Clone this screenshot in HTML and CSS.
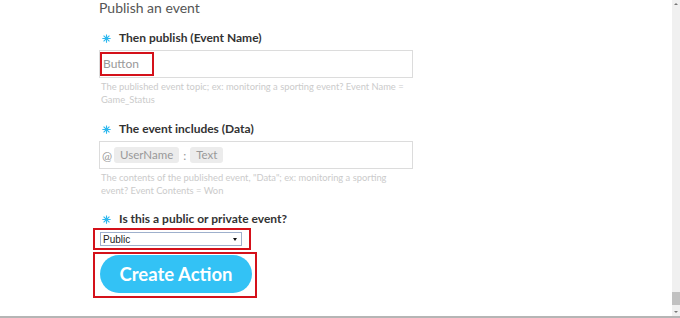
FILE: index.html
```html
<!DOCTYPE html>
<html>
<head>
<meta charset="utf-8">
<link rel="stylesheet" href="styles.css">
</head>
<body>
<div class="page">
  <main class="main">
    <div class="form">
      <h2 class="title">Publish an event</h2>

      <div class="label l1"><svg class="ast" viewBox="0 0 12 12"><path d="M6 0.5V11.5M0.5 6H11.5M2.1 2.1L9.9 9.9M9.9 2.1L2.1 9.9"/></svg>Then publish (Event Name)</div>
      <div class="input"><span class="mark-text">Button</span></div>
      <div class="help">The published event topic; ex: monitoring a sporting event? Event Name =<br>Game_Status</div>

      <div class="label l2"><svg class="ast" viewBox="0 0 12 12"><path d="M6 0.5V11.5M0.5 6H11.5M2.1 2.1L9.9 9.9M9.9 2.1L2.1 9.9"/></svg>The event includes (Data)</div>
      <div class="input data"><span class="at">@</span><span class="pill">UserName</span><span class="colon">:</span><span class="pill">Text</span></div>
      <div class="help">The contents of the published event, "Data"; ex: monitoring a sporting<br>event? Event Contents = Won</div>

      <div class="label l3"><svg class="ast" viewBox="0 0 12 12"><path d="M6 0.5V11.5M0.5 6H11.5M2.1 2.1L9.9 9.9M9.9 2.1L2.1 9.9"/></svg>Is this a public or private event?</div>
      <div class="mark sel-mark"><div class="select"><span>Public</span><span class="arrow"></span></div></div>
      <div class="mark btn-mark"><div class="btn">Create Action</div></div>
    </div>
  </main>
  <aside class="scrollbar">
    <div class="sb-arrow up"></div>
    <div class="sb-track"><div class="sb-thumb"></div></div>
    <div class="sb-arrow down"></div>
  </aside>
</div>
</body>
</html>
```

FILE: styles.css
```css
html, body {
  margin: 0;
  padding: 0;
  background: #fff;
}
.page {
  display: flex;
  width: 680px;
  height: 318px;
  overflow: hidden;
  border-bottom: 2px solid #b5b5b5;
  box-sizing: border-box;
}
.main {
  flex: 1;
  font-family: Lato, "Open Sans", sans-serif;
}
.form {
  display: flex;
  flex-direction: column;
  align-items: flex-start;
  padding-left: 99px;
  width: 314px;
}
.title {
  margin: 0;
  font-size: 14px;
  line-height: 16px;
  font-weight: normal;
  color: #555;
}
.label {
  display: flex;
  align-items: center;
  font-size: 12px;
  line-height: 16px;
  font-weight: bold;
  color: #333;
  margin-left: 3px;
}
.l1 { margin-top: 14px; }
.l2 { margin-top: 15px; }
.l3 { margin-top: 14px; }
.ast {
  width: 9px;
  height: 9px;
  margin-right: 8px;
  stroke: #2bb7ee;
  stroke-width: 1.5;
  fill: none;
}
.input {
  box-sizing: border-box;
  width: 314px;
  height: 28px;
  margin-top: 4px;
  border: 1px solid #dcdcdc;
  display: flex;
  align-items: center;
  font-size: 12px;
  color: #999;
  padding-left: 2px;
}
.mark-text {
  outline: 2px solid #d4111a;
  padding: 2px 13px 2px 1px;
  line-height: 16px;
}
.data .at { margin-right: 2px; }
.pill {
  background: #ececec;
  border-radius: 3px;
  padding: 0 6px;
  line-height: 16px;
  font-size: 11.5px;
}
.colon { margin: 0 4px; }
.help {
  margin-top: 2px;
  font-size: 9.35px;
  line-height: 13px;
  color: #cbcbcb;
  margin-left: 2px;
}
.mark {
  border: 2px solid #d4111a;
}
.sel-mark {
  margin-top: 1px;
  margin-left: -6px;
  padding: 2px 7px 2px 5px;
}
.select {
  box-sizing: border-box;
  width: 142px;
  height: 14px;
  border: 1px solid #9fb0cc;
  display: flex;
  align-items: center;
  justify-content: space-between;
  font-family: "Liberation Sans", Arial, sans-serif;
  font-size: 10px;
  color: #222;
  padding: 0 4px 0 2px;
}
.arrow {
  width: 0;
  height: 0;
  border-left: 2px solid transparent;
  border-right: 2px solid transparent;
  border-top: 3px solid #111;
}
.btn-mark {
  margin-top: 2px;
  margin-left: -6px;
  padding: 1px 3px 3px 5px;
}
.btn {
  width: 152px;
  height: 38px;
  border-radius: 19px;
  background: #33c2f5;
  color: #fff;
  font-size: 18.5px;
  font-weight: bold;
  display: flex;
  align-items: center;
  justify-content: center;
}
.scrollbar {
  width: 8px;
  background: #f0f0f0;
  display: flex;
  flex-direction: column;
  align-items: center;
}
.sb-arrow {
  width: 0;
  height: 0;
  border-left: 2px solid transparent;
  border-right: 2px solid transparent;
  margin: 3px 0;
}
.sb-arrow.up { border-bottom: 2px solid #777; }
.sb-arrow.down { border-top: 2px solid #777; }
.sb-track {
  flex: 1;
  width: 100%;
  display: flex;
  flex-direction: column;
  justify-content: flex-end;
  padding-bottom: 3px;
}
.sb-thumb {
  height: 13px;
  width: 100%;
  background: #c1c1c1;
}
```
